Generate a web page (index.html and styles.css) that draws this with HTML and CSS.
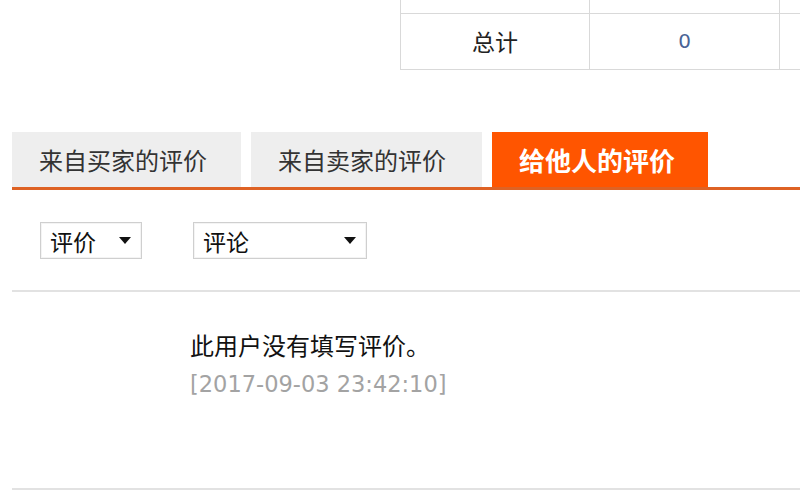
FILE: index.html
```html
<!DOCTYPE html>
<html lang="zh-CN">
<head>
<meta charset="utf-8">
<title>评价</title>
<link rel="stylesheet" href="styles.css">
</head>
<body>
<div class="page">
  <div class="stats">
    <table class="stats-table">
      <tr class="row-top"><td></td><td></td><td></td></tr>
      <tr class="row-total"><td class="label">总计</td><td class="num">0</td><td></td></tr>
    </table>
  </div>

  <div class="tabs">
    <div class="tab">来自买家的评价</div>
    <div class="tab">来自卖家的评价</div>
    <div class="tab active">给他人的评价</div>
  </div>

  <div class="filters">
    <div class="select sel-small"><span>评价</span><i class="caret"></i></div>
    <div class="select sel-wide"><span>评论</span><i class="caret"></i></div>
  </div>

  <div class="comment">
    <div class="comment-text">此用户没有填写评价。</div>
    <div class="comment-date">[2017-09-03 23:42:10]</div>
  </div>
</div>
</body>
</html>
```

FILE: styles.css
```css
html, body {
  margin: 0;
  padding: 0;
  background: #fff;
  overflow: hidden;
}
body {
  width: 800px;
  height: 500px;
  font-family: "Noto Sans CJK SC", "Noto Sans", sans-serif;
  color: #222;
}
.page {
  width: 800px;
}
.stats {
  padding-left: 400px;
}
.stats-table {
  border-collapse: collapse;
  width: 420px;
  table-layout: fixed;
}
.stats-table td {
  border-left: 1px solid #d9d9d9;
  border-bottom: 1px solid #d9d9d9;
  padding: 0;
  text-align: center;
}
.stats-table td:nth-child(1) { width: 188px; }
.stats-table td:nth-child(2) { width: 189px; }
.row-top td {
  height: 13px;
}
.row-total td {
  height: 55px;
  font-size: 23px;
  line-height: 55px;
}
.row-total .label {
  color: #222;
}
.row-total .num {
  font-family: "DejaVu Sans", Verdana, sans-serif;
  font-size: 20px;
  color: #4a6496;
}

.tabs {
  display: flex;
  gap: 10px;
  margin: 62px 0 0 12px;
  border-bottom: 3px solid #de6224;
}
.tab {
  height: 55px;
  line-height: 55px;
  background: #eeeeee;
  color: #333;
  font-size: 24px;
  padding-left: 27px;
  box-sizing: border-box;
  width: 229px;
}
.tab:nth-child(2) {
  width: 231px;
}
.tab.active {
  background: #ff5500;
  color: #fff;
  font-weight: bold;
  font-size: 26px;
  width: 216px;
  padding-left: 27px;
}

.filters {
  display: flex;
  align-items: flex-start;
  gap: 51px;
  padding: 32px 0 0 40px;
  height: 100px;
  box-sizing: border-box;
}
.select {
  height: 37px;
  box-sizing: border-box;
  border: 1px solid #cfcfcf;
  box-shadow: inset 0 0 0 1px #f4f4f4;
  display: flex;
  align-items: center;
  justify-content: space-between;
  padding: 0 10px 0 9px;
  font-size: 23px;
  color: #111;
}
.sel-small { width: 102px; }
.sel-wide { width: 174px; }
.caret {
  display: block;
  width: 0;
  height: 0;
  border-left: 6px solid transparent;
  border-right: 6px solid transparent;
  border-top: 7px solid #111;
}

.comment {
  margin-left: 12px;
  border-top: 2px solid #e2e2e2;
  border-bottom: 2px solid #e2e2e2;
  height: 200px;
  padding: 34px 0 0 178px;
  box-sizing: border-box;
}
.comment-text {
  font-size: 24px;
  line-height: 38px;
  color: #111;
}
.comment-date {
  font-family: "DejaVu Sans", Verdana, sans-serif;
  font-size: 22.5px;
  line-height: 40px;
  color: #a3a3a3;
}
```
